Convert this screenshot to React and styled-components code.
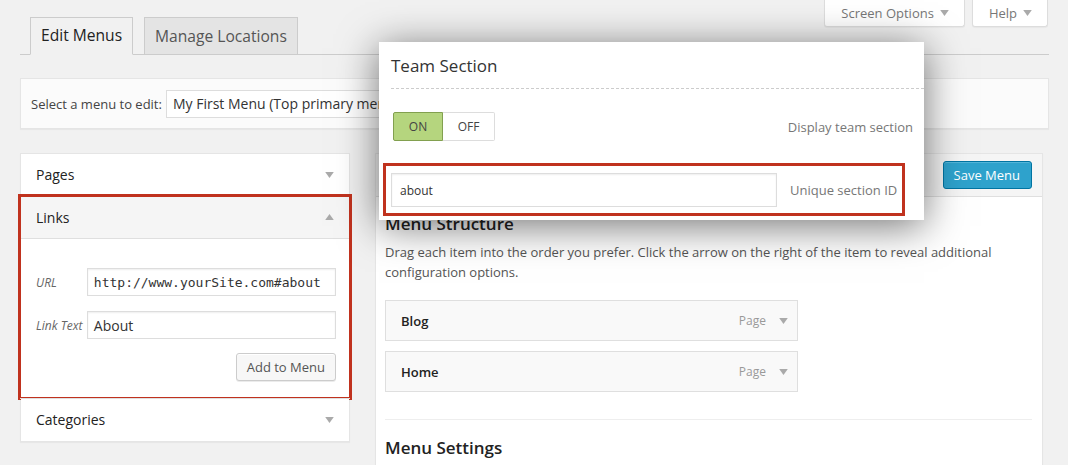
import React from 'react';
import styled, { createGlobalStyle } from 'styled-components';

const GlobalStyle = createGlobalStyle`
  * { box-sizing: border-box; }
  body {
    margin: 0;
    background: #f1f1f1;
    font-family: 'Open Sans', 'Liberation Sans', sans-serif;
    color: #444;
  }
`;

const menuItems = ['Blog', 'Home'];

function Arrow({ up }) {
  return (
    <ArrowIcon viewBox='0 0 10 7' $up={up}>
      <path d='M0 0 L10 0 L5 7 Z' />
    </ArrowIcon>
  );
}

function App() {
  return (
    <React.Fragment>
      <GlobalStyle />
      <Page>
        <Header>
          <Tabs>
            <Tab $active>Edit Menus</Tab>
            <Tab>Manage Locations</Tab>
          </Tabs>
          <ScreenMeta>
            <MetaButton>
              Screen Options <Arrow />
            </MetaButton>
            <MetaButton>
              Help <Arrow />
            </MetaButton>
          </ScreenMeta>
        </Header>

        <SelectBar>
          <SelectLabel>Select a menu to edit:</SelectLabel>
          <FakeSelect>My First Menu (Top primary menu)</FakeSelect>
        </SelectBar>

        <Columns>
          <Accordion>
            <SectionHeader>
              Pages <Arrow />
            </SectionHeader>
            <Section $highlight>
              <SectionHeader $open>
                Links <Arrow up />
              </SectionHeader>
              <LinksBody>
                <FieldRow>
                  <FieldLabel>URL</FieldLabel>
                  <TextInput $mono>http://www.yourSite.com#about</TextInput>
                </FieldRow>
                <FieldRow>
                  <FieldLabel>Link Text</FieldLabel>
                  <TextInput>About</TextInput>
                </FieldRow>
                <ButtonRow>
                  <SecondaryButton>Add to Menu</SecondaryButton>
                </ButtonRow>
              </LinksBody>
            </Section>
            <Section>
              <SectionHeader>
                Categories <Arrow />
              </SectionHeader>
            </Section>
          </Accordion>

          <MenuPanel>
            <PanelHeader>
              <PrimaryButton>Save Menu</PrimaryButton>
            </PanelHeader>
            <PanelBody>
              <PanelTitle>Menu Structure</PanelTitle>
              <Help>
                Drag each item into the order you prefer. Click the arrow on the
                right of the item to reveal additional configuration options.
              </Help>
              <ItemList>
                {menuItems.map((item) => (
                  <MenuItem key={item}>
                    <ItemTitle>{item}</ItemTitle>
                    <ItemMeta>
                      Page <Arrow />
                    </ItemMeta>
                  </MenuItem>
                ))}
              </ItemList>
              <Divider />
              <PanelTitle>Menu Settings</PanelTitle>
            </PanelBody>
          </MenuPanel>
        </Columns>

        <Modal>
          <ModalTitle>Team Section</ModalTitle>
          <ToggleRow>
            <Toggle>
              <ToggleOption $on>ON</ToggleOption>
              <ToggleOption>OFF</ToggleOption>
            </Toggle>
            <Hint>Display team section</Hint>
          </ToggleRow>
          <IdBox>
            <IdInput>about</IdInput>
            <Hint>Unique section ID</Hint>
          </IdBox>
        </Modal>
      </Page>
    </React.Fragment>
  );
}

export default App;

const Page = styled.div`
  position: relative;
  height: 465px;
  overflow: hidden;
  padding: 0 19px 0 20px;
`;

const ArrowIcon = styled.svg`
  width: 9px;
  height: 6px;
  fill: #aaa;
  flex-shrink: 0;
  transform: ${(p) => (p.$up ? 'rotate(180deg)' : 'none')};
`;

const Header = styled.div`
  display: flex;
  align-items: flex-start;
  height: 55px;
  border-bottom: 1px solid #ccc;
`;

const Tabs = styled.div`
  display: flex;
  align-items: flex-start;
  gap: 11px;
  margin: 17px 0 0 10px;
`;

const Tab = styled.div`
  height: ${(p) => (p.$active ? '38px' : '37px')};
  padding: 0 10px;
  display: flex;
  align-items: center;
  border: 1px solid #ccc;
  border-bottom: ${(p) => (p.$active ? '1px solid #f1f1f1' : 'none')};
  background: ${(p) => (p.$active ? '#f1f1f1' : '#e4e4e4')};
  color: ${(p) => (p.$active ? '#222' : '#555')};
  font-size: 15.6px;
  padding-bottom: ${(p) => (p.$active ? '2px' : '1px')};
`;

const ScreenMeta = styled.div`
  margin-left: auto;
  margin-right: 1px;
  display: flex;
  gap: 7px;
`;

const MetaButton = styled.div`
  height: 27px;
  padding: 0 15px 0 16px;
  display: flex;
  align-items: center;
  gap: 6px;
  background: #fff;
  border: 1px solid #ddd;
  border-top: none;
  border-radius: 0 0 3px 3px;
  box-shadow: 0 1px 1px rgba(0, 0, 0, 0.04);
  color: #777;
  font-size: 13px;
`;

const SelectBar = styled.div`
  margin-top: 23px;
  height: 51px;
  display: flex;
  align-items: center;
  gap: 4px;
  padding: 0 10px;
  background: #fbfbfb;
  border: 1px solid #e5e5e5;
  box-shadow: 0 1px 1px rgba(0, 0, 0, 0.04);
`;

const SelectLabel = styled.span`
  font-size: 13px;
  color: #444;
`;

const FakeSelect = styled.div`
  height: 28px;
  width: 320px;
  display: flex;
  align-items: center;
  padding: 0 6px;
  background: #fff;
  border: 1px solid #ddd;
  font-size: 14px;
  color: #333;
  white-space: nowrap;
  overflow: hidden;
`;

const Columns = styled.div`
  display: flex;
  align-items: flex-start;
  gap: 25px;
  margin-top: 24px;
`;

const Accordion = styled.div`
  width: 330px;
  flex-shrink: 0;
  background: #fff;
  border: 1px solid #e5e5e5;
  box-shadow: 0 1px 1px rgba(0, 0, 0, 0.04);
`;

const Section = styled.div`
  position: relative;
  border-top: 1px solid #dfdfdf;
  outline: ${(p) => (p.$highlight ? '3px solid #c0321e' : 'none')};
  outline-offset: -1px;
  margin: 0 -1px;
  padding: 0 1px;
`;

const SectionHeader = styled.div`
  height: 42px;
  padding: 0 15px 1px;
  display: flex;
  align-items: center;
  justify-content: space-between;
  font-size: 14px;
  color: #222;
  background: ${(p) => (p.$open ? '#f5f5f5' : '#fff')};
  border-bottom: ${(p) => (p.$open ? '1px solid #dfdfdf' : 'none')};
`;

const LinksBody = styled.div`
  padding: 29px 13px 17px 15px;
  display: flex;
  flex-direction: column;
  gap: 15px;
`;

const FieldRow = styled.div`
  display: flex;
  align-items: center;
`;

const FieldLabel = styled.span`
  width: 51px;
  font-size: 12px;
  font-style: italic;
  color: #666;
`;

const TextInput = styled.div`
  width: 250px;
  height: 28px;
  display: flex;
  align-items: center;
  padding: 0 6px;
  border: 1px solid #ddd;
  box-shadow: inset 0 1px 2px rgba(0, 0, 0, 0.07);
  font-family: ${(p) =>
    p.$mono ? "'DejaVu Sans Mono', 'Liberation Mono', monospace" : 'inherit'};
  font-size: ${(p) => (p.$mono ? '13px' : '14px')};
  color: #333;
  white-space: nowrap;
  overflow: hidden;
`;

const ButtonRow = styled.div`
  display: flex;
  justify-content: flex-end;
  margin-top: -1px;
`;

const SecondaryButton = styled.div`
  height: 28px;
  padding: 0 10px;
  display: flex;
  align-items: center;
  background: #f7f7f7;
  border: 1px solid #ccc;
  border-radius: 3px;
  box-shadow: inset 0 1px 0 #fff, 0 1px 0 rgba(0, 0, 0, 0.08);
  font-size: 13px;
  color: #555;
`;

const MenuPanel = styled.div`
  width: 668px;
  height: 400px;
  background: #fff;
  border: 1px solid #e5e5e5;
  box-shadow: 0 1px 1px rgba(0, 0, 0, 0.04);
`;

const PanelHeader = styled.div`
  height: 43px;
  display: flex;
  align-items: center;
  justify-content: flex-end;
  padding: 0 10px;
  background: #f5f5f5;
  border-bottom: 1px solid #dfdfdf;
`;

const PrimaryButton = styled.div`
  height: 28px;
  padding: 0 11px 0 10px;
  display: flex;
  align-items: center;
  background: #2ea2cc;
  border: 1px solid #0074a2;
  border-radius: 3px;
  box-shadow: inset 0 1px 0 rgba(120, 200, 230, 0.5);
  color: #fff;
  font-size: 13px;
`;

const PanelBody = styled.div`
  padding: 15px 10px 0 9px;
`;

const PanelTitle = styled.h3`
  margin: 0;
  font-size: 17px;
  line-height: 24px;
  font-weight: 600;
  color: #222;
`;

const Help = styled.p`
  margin: 6px 0 0;
  font-size: 13px;
  line-height: 20px;
  color: #555;
`;

const ItemList = styled.div`
  margin-top: 18px;
  display: flex;
  flex-direction: column;
  gap: 10px;
`;

const MenuItem = styled.div`
  width: 413px;
  height: 41px;
  display: flex;
  align-items: center;
  justify-content: space-between;
  padding: 0 9px 0 15px;
  background: #f9f9f9;
  border: 1px solid #dfdfdf;
`;

const ItemTitle = styled.span`
  font-size: 13px;
  font-weight: 600;
  color: #222;
`;

const ItemMeta = styled.span`
  display: flex;
  align-items: center;
  gap: 13px;
  font-size: 12px;
  color: #999;
`;

const Divider = styled.hr`
  margin: 27px 0 16px;
  border: none;
  border-top: 1px solid #eee;
`;

const Modal = styled.div`
  position: absolute;
  left: 379px;
  top: 42px;
  width: 545px;
  height: 178px;
  background: #fff;
  box-shadow: 0 6px 38px rgba(0, 0, 0, 0.55);
`;

const ModalTitle = styled.div`
  margin-left: 12px;
  padding: 12px 0 10px;
  border-bottom: 1px dashed #ccc;
  font-size: 17px;
  line-height: 24px;
  color: #333;
`;

const ToggleRow = styled.div`
  margin-top: 23px;
  padding: 0 11px 0 14px;
  display: flex;
  align-items: center;
  justify-content: space-between;
`;

const Toggle = styled.div`
  display: flex;
  height: 29px;
`;

const ToggleOption = styled.div`
  width: ${(p) => (p.$on ? '50px' : '52px')};
  display: flex;
  align-items: center;
  justify-content: center;
  font-size: 12px;
  color: #444;
  background: ${(p) => (p.$on ? '#b5d57e' : '#fff')};
  border: 1px solid ${(p) => (p.$on ? '#82a04f' : '#ddd')};
  border-left: ${(p) => (p.$on ? '1px solid #82a04f' : 'none')};
  border-radius: ${(p) => (p.$on ? '2px 0 0 2px' : '0 2px 2px 0')};
`;

const Hint = styled.span`
  font-size: 13px;
  color: #777;
  white-space: nowrap;
`;

const IdBox = styled.div`
  margin: 22px 0 0 4px;
  width: 522px;
  height: 53px;
  display: flex;
  align-items: center;
  gap: 13px;
  padding: 1px 0 0 5px;
  border: 3px solid #c0321e;
`;

const IdInput = styled.div`
  width: 386px;
  flex-shrink: 0;
  height: 34px;
  display: flex;
  align-items: center;
  padding: 0 8px;
  border: 1px solid #ddd;
  box-shadow: inset 0 1px 2px rgba(0, 0, 0, 0.07);
  font-size: 12px;
  color: #333;
`;
